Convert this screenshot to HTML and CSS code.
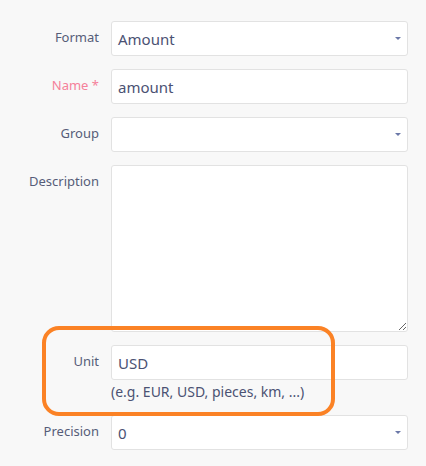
FILE: index.html
```html
<!DOCTYPE html>
<html>
<head>
<meta charset="utf-8">
<link rel="stylesheet" href="styles.css">
</head>
<body>
<form class="form">
  <div class="row">
    <label class="label">Format</label>
    <div class="field">
      <div class="select"><span>Amount</span><span class="caret"></span></div>
    </div>
  </div>
  <div class="row">
    <label class="label required">Name *</label>
    <div class="field"><div class="input">amount</div></div>
  </div>
  <div class="row">
    <label class="label">Group</label>
    <div class="field">
      <div class="select"><span></span><span class="caret"></span></div>
    </div>
  </div>
  <div class="row">
    <label class="label">Description</label>
    <div class="field"><textarea class="textarea"></textarea></div>
  </div>
  <div class="row highlight-row">
    <label class="label">Unit</label>
    <div class="field">
      <div class="input">USD</div>
      <div class="hint">(e.g. EUR, USD, pieces, km, ...)</div>
    </div>
    <div class="highlight"></div>
  </div>
  <div class="row">
    <label class="label">Precision</label>
    <div class="field">
      <div class="select"><span>0</span><span class="caret"></span></div>
    </div>
  </div>
</form>
</body>
</html>
```
FILE: styles.css
```css
html, body {
  margin: 0;
  padding: 0;
  background: #f8f8f8;
}
body {
  font-family: "Noto Sans", "Open Sans", sans-serif;
  color: #4b5273;
}
.form {
  display: flex;
  flex-direction: column;
  gap: 13px;
  padding: 21px 18px 0 0;
}
.row {
  display: grid;
  grid-template-columns: 99px 1fr;
  column-gap: 12px;
  align-items: start;
}
.label {
  text-align: right;
  font-size: 13px;
  line-height: 18px;
  padding-top: 7px;
  color: #565d78;
}
.label.required {
  color: #f5809a;
}
.input, .select, .textarea {
  box-sizing: border-box;
  height: 35px;
  background: #fff;
  border: 1px solid #e2e2e2;
  border-radius: 3px;
  font-size: 15px;
  line-height: 20px;
  padding: 7px 6px;
  color: #4b5273;
}
.select {
  display: flex;
  justify-content: space-between;
  align-items: center;
  padding: 0 6px;
}
.caret {
  width: 0;
  height: 0;
  border-left: 3px solid transparent;
  border-right: 3px solid transparent;
  border-top: 3px solid #6b78a8;
}
.textarea {
  display: block;
  width: 100%;
  height: 167px;
  font-family: inherit;
  resize: vertical;
  margin: 0;
}
.hint {
  font-size: 14px;
  line-height: 20px;
  margin-top: 2px;
  color: #4b5273;
}
.highlight-row {
  position: relative;
}
.highlight {
  position: absolute;
  left: 42px;
  top: -19px;
  width: 293px;
  height: 90px;
  box-sizing: border-box;
  border: 4px solid #fb8225;
  border-radius: 17px;
  pointer-events: none;
}
```
